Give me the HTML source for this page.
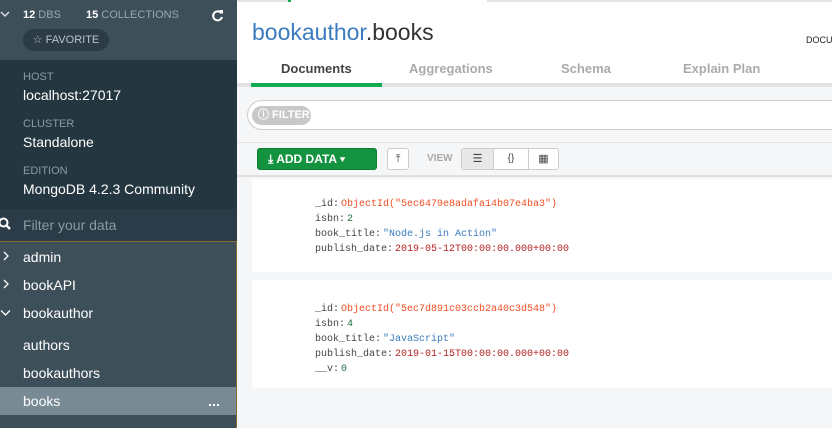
<!DOCTYPE html>
<html><head><style>
*{margin:0;padding:0;box-sizing:border-box}
body{width:832px;height:428px;overflow:hidden;font-family:"Liberation Sans",sans-serif;background:#f5f6f7;position:relative}
.sb{position:absolute;left:0;top:0;width:237px;height:428px;background:#3d4f58}
.ab{position:absolute}
.lbl{color:#8a9ba4;font-size:11px}
.val{color:#fff;font-size:14px}
.mono{font-family:"Liberation Mono",monospace;font-size:10px;line-height:15px;color:#444}
.mono span{margin-left:2px}
.o{color:#f04e23}.n{color:#1a6e3e}.s{color:#3b7bbf}.d{color:#b51f1f}
.tab{position:absolute;top:61px;font-size:13px;font-weight:bold;color:#aaa}
</style></head><body>
<div class="sb">
  <svg class="ab" style="left:0;top:10px" width="10" height="8"><path d="M1 2 L5 6 L9 2" stroke="#dde" stroke-width="1.4" fill="none"/></svg>
  <div class="ab" style="left:23px;top:9px;font-size:11px;color:#9aa9b1"><b style="color:#fff">12</b> DBS</div>
  <div class="ab" style="left:86px;top:9px;font-size:11px;color:#9aa9b1"><b style="color:#fff">15</b> COLLECTIONS</div>
  <svg class="ab" style="left:211px;top:9px" width="13" height="13"><path d="M10.5 4.5 A4.5 4.5 0 1 0 11 8" stroke="#fff" stroke-width="2" fill="none"/><path d="M8 1 L12 1 L12 5 Z" fill="#fff"/></svg>
  <div class="ab" style="left:23px;top:29px;width:86px;height:22px;border-radius:11px;background:#2b3c46;color:#b8c4ca;font-size:11px;line-height:22px;text-align:center">&#9734; FAVORITE</div>
  <div class="ab" style="left:0;top:60px;width:237px;height:149px;background:#243640"></div>
  <div class="ab lbl" style="left:23px;top:71px">HOST</div>
  <div class="ab val" style="left:23px;top:87px">localhost:27017</div>
  <div class="ab lbl" style="left:23px;top:118px">CLUSTER</div>
  <div class="ab val" style="left:23px;top:134px">Standalone</div>
  <div class="ab lbl" style="left:23px;top:165px">EDITION</div>
  <div class="ab val" style="left:23px;top:181px">MongoDB 4.2.3 Community</div>
  <div class="ab" style="left:0;top:209px;width:237px;height:32px;background:#2b3b47"></div>
  <svg class="ab" style="left:-2px;top:217px" width="13" height="13"><circle cx="5.5" cy="5.5" r="4" stroke="#fff" stroke-width="2" fill="none"/><path d="M8.5 8.5 L12 12" stroke="#fff" stroke-width="2.4"/></svg>
  <div class="ab" style="left:23px;top:217px;color:#8a9ba4;font-size:14px">Filter your data</div>
  <div class="ab" style="left:0;top:241px;width:237px;height:1px;background:#8a6d2c"></div>
  <div class="ab" style="left:236px;top:241px;width:1px;height:187px;background:#8a6d2c"></div>
  <svg class="ab" style="left:2px;top:251px" width="8" height="10"><path d="M2 1 L6 5 L2 9" stroke="#fff" stroke-width="1.3" fill="none"/></svg>
  <div class="ab val" style="left:23px;top:249px">admin</div>
  <svg class="ab" style="left:2px;top:279px" width="8" height="10"><path d="M2 1 L6 5 L2 9" stroke="#fff" stroke-width="1.3" fill="none"/></svg>
  <div class="ab val" style="left:23px;top:277px">bookAPI</div>
  <svg class="ab" style="left:0;top:309px" width="11" height="8"><path d="M1 1.5 L5.5 6 L10 1.5" stroke="#fff" stroke-width="1.3" fill="none"/></svg>
  <div class="ab val" style="left:23px;top:305px">bookauthor</div>
  <div class="ab val" style="left:23px;top:337px">authors</div>
  <div class="ab val" style="left:23px;top:365px">bookauthors</div>
  <div class="ab" style="left:0;top:387px;width:236px;height:28px;background:#788a93"></div>
  <div class="ab val" style="left:23px;top:393px">books</div>
  <div class="ab" style="left:209px;top:404px;width:2px;height:2px;background:#fff;box-shadow:4px 0 #fff,8px 0 #fff"></div>
</div>
<div class="ab" style="left:237px;top:0;width:595px;height:87px;background:#fff"></div>
<div class="ab" style="left:237px;top:0;width:51px;height:2px;background:#e4e4e4"></div>
<div class="ab" style="left:288px;top:0;width:3px;height:2px;background:#13aa52"></div>
<div class="ab" style="left:487px;top:0;width:345px;height:2px;background:#e4e4e4"></div>
<div class="ab" style="left:252px;top:19px;font-size:23px;color:#333"><span style="color:#3b7bbf">bookauthor</span>.books</div>
<div class="ab" style="left:806px;top:35px;font-size:9px;color:#222">DOCU</div>
<div class="tab" style="left:281px;color:#444">Documents</div>
<div class="tab" style="left:409px">Aggregations</div>
<div class="tab" style="left:561px">Schema</div>
<div class="tab" style="left:683px">Explain Plan</div>
<div class="ab" style="left:237px;top:83px;width:595px;height:4px;background:#e2e4e6"></div>
<div class="ab" style="left:251px;top:83px;width:131px;height:4px;background:#13aa52"></div>
<div class="ab" style="left:247px;top:100px;width:600px;height:30px;border:1px solid #ccc;border-radius:15px;background:#fff"></div>
<div class="ab" style="left:252px;top:106px;width:59px;height:19px;border-radius:10px;background:#c8c8c8;color:#fff;font-size:11px;font-weight:bold;line-height:19px;padding-left:6px">&#9432; FILTER</div>
<div class="ab" style="left:237px;top:142px;width:595px;height:1px;background:#e4e4e4"></div>
<div class="ab" style="left:257px;top:148px;width:120px;height:22px;border-radius:3px;background:#13933f;border:1px solid #0f7d34;color:#fff;font-size:12px;font-weight:bold;line-height:20px;padding-left:10px">&#10515; ADD DATA &#9662;</div>
<div class="ab" style="left:387px;top:148px;width:22px;height:22px;border:1px solid #ccc;border-radius:3px;background:#fff;font-size:11px;text-align:center;line-height:20px;color:#444">&#10514;</div>
<div class="ab" style="left:427px;top:153px;font-size:10px;font-weight:bold;color:#aaa">VIEW</div>
<div class="ab" style="left:461px;top:148px;width:98px;height:22px;border:1px solid #ccc;border-radius:3px;background:#fff"></div>
<div class="ab" style="left:462px;top:149px;width:31px;height:20px;background:#e8e8e8;font-size:11px;text-align:center;line-height:20px;color:#444">&#9776;</div>
<div class="ab" style="left:493px;top:149px;width:1px;height:20px;background:#ccc"></div>
<div class="ab" style="left:494px;top:149px;width:34px;height:20px;font-size:10px;text-align:center;line-height:20px;color:#444">{}</div>
<div class="ab" style="left:528px;top:149px;width:1px;height:20px;background:#ccc"></div>
<div class="ab" style="left:529px;top:149px;width:29px;height:20px;font-size:11px;text-align:center;line-height:20px;color:#444">&#9638;</div>
<div class="ab" style="left:237px;top:175px;width:595px;height:2px;background:#e0e0e0"></div>
<div class="ab" style="left:252px;top:179px;width:580px;height:93px;background:#fff"></div>
<div class="ab mono" style="left:315px;top:197px">
<div>_id:<span class="o">ObjectId("5ec6479e8adafa14b07e4ba3")</span></div>
<div>isbn:<span class="n">2</span></div>
<div>book_title:<span class="s">"Node.js in Action"</span></div>
<div>publish_date:<span class="d">2019-05-12T00:00:00.000+00:00</span></div>
</div>
<div class="ab" style="left:252px;top:280px;width:580px;height:108px;background:#fff"></div>
<div class="ab mono" style="left:315px;top:302px">
<div>_id:<span class="o">ObjectId("5ec7d891c03ccb2a40c3d548")</span></div>
<div>isbn:<span class="n">4</span></div>
<div>book_title:<span class="s">"JavaScript"</span></div>
<div>publish_date:<span class="d">2019-01-15T00:00:00.000+00:00</span></div>
<div>__v:<span class="n">0</span></div>
</div>
</body></html>
